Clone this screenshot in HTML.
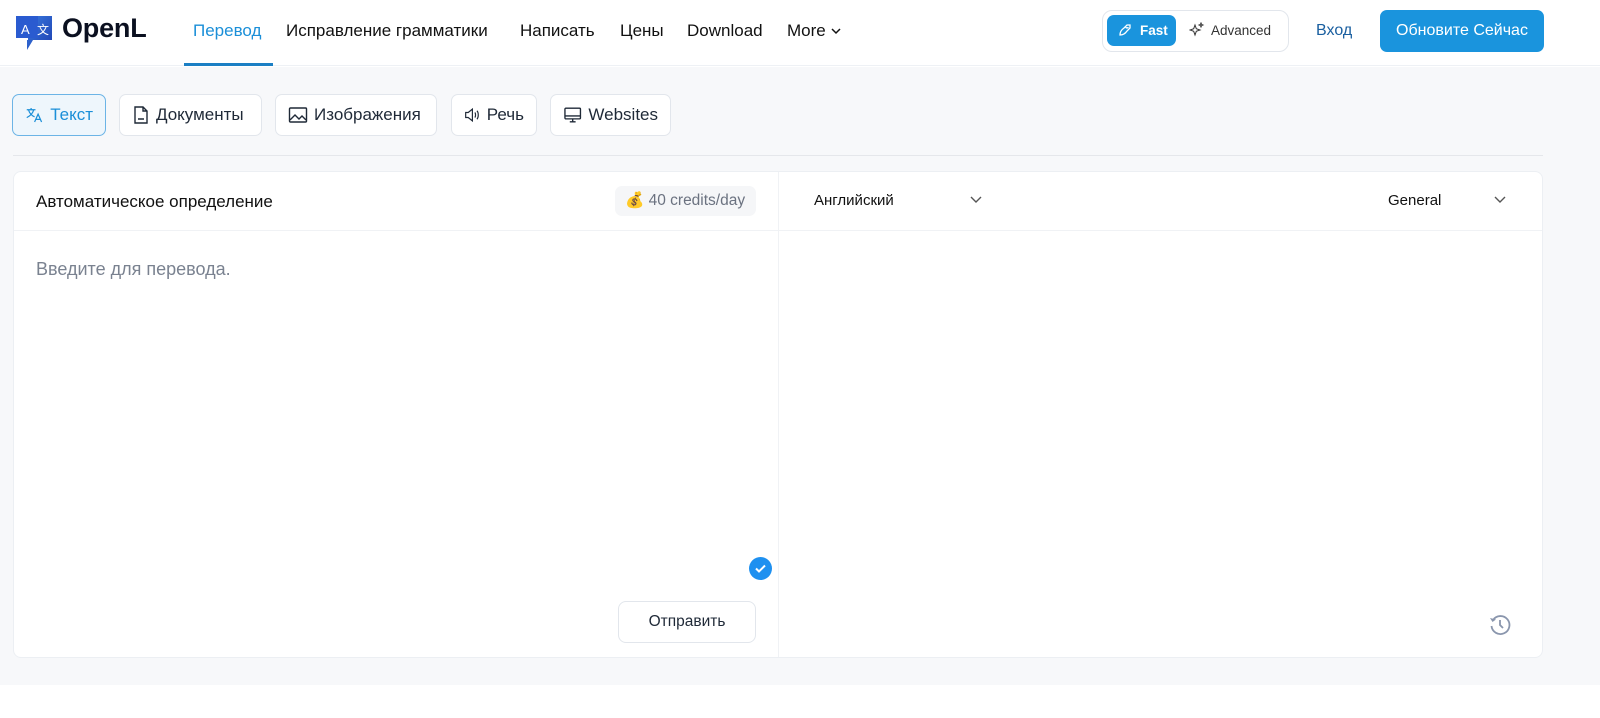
<!DOCTYPE html>
<html><head><meta charset="utf-8"><style>
*{box-sizing:border-box;margin:0;padding:0}
body{width:1600px;height:718px;background:#fff;font-family:"Liberation Sans",sans-serif;color:#111827;position:relative;overflow:hidden}
.hdr{position:absolute;left:0;top:0;width:1600px;height:66px;background:#fff;border-bottom:1px solid #eef1f5}
.main{position:absolute;left:0;top:67px;width:1600px;height:618px;background:#f7f8fa}
.nav{position:absolute;top:21px;font-size:17px;color:#111}
.logo{position:absolute;left:62px;top:13px;font-size:27px;font-weight:bold;color:#0b1020;letter-spacing:-0.2px}
.pill{position:absolute;top:94px;height:42px;border:1px solid #e2e6ec;border-radius:7px;background:#fff;font-size:17px;color:#1f2937;display:flex;align-items:center;padding:0 12px;gap:6px}
.card{position:absolute;left:13px;top:171px;width:1530px;height:487px;background:#fff;border:1px solid #eceff3;border-radius:8px}
</style></head><body>
<div class="hdr">
 <svg style="position:absolute;left:16px;top:15px" width="38" height="38" viewBox="0 0 38 38">
  <defs><linearGradient id="g" x1="0" y1="0" x2="1" y2="1"><stop offset="0" stop-color="#3a7be0"/><stop offset="1" stop-color="#1d3fb0"/></linearGradient></defs>
  <path d="M12 1h24v24H17l-6 10v-10H12z" fill="url(#g)"/>
  <path d="M0 1h22v22H0z" fill="#2a5bd0"/>
  <text x="5" y="19" fill="#fff" font-size="13" font-family="Liberation Sans">A</text>
  <text x="21" y="19" fill="#fff" font-size="12" font-family="Noto Sans CJK SC,sans-serif">文</text>
 </svg>
 <div class="logo">OpenL</div>
 <div class="nav" style="left:193px;color:#1b8fd8">Перевод</div>
 <div style="position:absolute;left:184px;top:63px;width:89px;height:3px;background:#1b7fc4"></div>
 <div class="nav" style="left:286px">Исправление грамматики</div>
 <div class="nav" style="left:520px">Написать</div>
 <div class="nav" style="left:620px">Цены</div>
 <div class="nav" style="left:687px">Download</div>
 <div class="nav" style="left:787px">More <svg width="12" height="10" viewBox="0 0 12 10"><path d="M2 3l4 4 4-4" stroke="#111" stroke-width="1.5" fill="none"/></svg></div>
 <div style="position:absolute;left:1102px;top:10px;width:187px;height:42px;border:1px solid #e2e6ec;border-radius:10px"></div>
 <div style="position:absolute;left:1107px;top:15px;width:69px;height:31px;background:#1a94dd;border-radius:7px;color:#fff;font-size:13.5px;font-weight:bold;line-height:31px;padding-left:33px">Fast</div>
 <svg style="position:absolute;left:1117px;top:22px" width="16" height="16" viewBox="0 0 16 16"><path d="M3 13c0-3 1-5 4-7l3-3h3v3l-3 3c-2 3-4 4-7 4z M9 5a1 1 0 1 0 2 0" stroke="#fff" stroke-width="1.3" fill="none"/></svg>
 <svg style="position:absolute;left:1189px;top:22px" width="16" height="16" viewBox="0 0 16 16"><path d="M6 3l1.3 3.7L11 8l-3.7 1.3L6 13l-1.3-3.7L1 8l3.7-1.3z M12 1l.6 1.4L14 3l-1.4.6L12 5l-.6-1.4L10 3l1.4-.6z" stroke="#333" stroke-width="1" fill="none"/></svg>
 <div style="position:absolute;left:1211px;top:23px;font-size:13.5px;color:#333">Advanced</div>
 <div style="position:absolute;left:1316px;top:22px;font-size:16px;color:#1a5fa0">Вход</div>
 <div style="position:absolute;left:1380px;top:10px;width:164px;height:42px;background:#1a94dd;border-radius:7px;color:#fff;font-size:16px;text-align:center;line-height:42px">Обновите Сейчас</div>
</div>
<div class="main">
 <div style="position:absolute;left:13px;top:88px;width:1530px;height:1px;background:#e5e7eb"></div>
</div>
<div class="pill" style="left:12px;width:94px;border-color:#6cb4e6;background:#eef6fc;color:#1b8fd8"><svg width="22" height="20" viewBox="0 0 22 20"><path d="M2 4h10M7 2v2M4 4c1 4 4 7 7 8M10 4c-1 4-4 7-8 9M11 18l4-9 4 9M12.5 15h5" stroke="#1b8fd8" stroke-width="1.4" fill="none"/></svg>Текст</div>
<div class="pill" style="left:119px;width:143px"><svg width="18" height="20" viewBox="0 0 18 20"><path d="M3 2h8l4 4v12H3z M11 2v4h4 M6 14h6" stroke="#1f2937" stroke-width="1.4" fill="none"/></svg>Документы</div>
<div class="pill" style="left:275px;width:162px"><svg width="20" height="18" viewBox="0 0 20 18"><rect x="1.5" y="2" width="17" height="14" rx="1" stroke="#1f2937" stroke-width="1.4" fill="none"/><path d="M2 14l5-5 4 4 3-3 4 4" stroke="#1f2937" stroke-width="1.4" fill="none"/></svg>Изображения</div>
<div class="pill" style="left:451px;width:86px"><svg width="20" height="18" viewBox="0 0 20 18"><path d="M2 6h3l5-4v14l-5-4H2z M13 6c1 1.5 1 4.5 0 6 M15.5 4c2 2.5 2 7.5 0 10" stroke="#1f2937" stroke-width="1.4" fill="none"/></svg>Речь</div>
<div class="pill" style="left:550px;width:121px"><svg width="20" height="18" viewBox="0 0 20 18"><rect x="2" y="2" width="16" height="11" rx="1" stroke="#1f2937" stroke-width="1.4" fill="none"/><path d="M2 10h16M7 16h6M10 13v3" stroke="#1f2937" stroke-width="1.4"/></svg>Websites</div>
<div class="card">
 <div style="position:absolute;left:0;top:58px;width:1528px;height:1px;background:#f0f2f5"></div>
 <div style="position:absolute;left:764px;top:0;width:1px;height:485px;background:#f0f2f5"></div>
 <div style="position:absolute;left:22px;top:20px;font-size:17px;color:#111">Автоматическое определение</div>
 <div style="position:absolute;left:601px;top:14px;width:141px;height:30px;background:#f5f6f8;border-radius:7px;font-size:15.5px;color:#6b7280;line-height:30px;padding-left:10px">💰 40 credits/day</div>
 <div style="position:absolute;left:800px;top:20px;font-size:15px;color:#111">Английский</div>
 <svg style="position:absolute;left:955px;top:23px" width="14" height="10" viewBox="0 0 14 10"><path d="M2 2l5 5 5-5" stroke="#555" stroke-width="1.4" fill="none"/></svg>
 <div style="position:absolute;left:1374px;top:20px;font-size:15px;color:#111">General</div>
 <svg style="position:absolute;left:1479px;top:23px" width="14" height="10" viewBox="0 0 14 10"><path d="M2 2l5 5 5-5" stroke="#555" stroke-width="1.4" fill="none"/></svg>
 <div style="position:absolute;left:22px;top:87px;font-size:18px;color:#7a8290">Введите для перевода.</div>
 <div style="position:absolute;left:735px;top:385px;width:23px;height:23px;border-radius:50%;background:#1e90f0"><svg width="23" height="23" viewBox="0 0 23 23"><path d="M7 11.5l3 3 6-6" stroke="#fff" stroke-width="2" fill="none"/></svg></div>
 <div style="position:absolute;left:604px;top:429px;width:138px;height:42px;border:1px solid #e2e6ec;border-radius:8px;font-size:15.5px;color:#1f2937;text-align:center;line-height:40px">Отправить</div>
 <svg style="position:absolute;left:1473px;top:440px" width="26" height="26" viewBox="0 0 26 26"><path d="M6 8a9 9 0 1 1-1.5 6" stroke="#8a96ad" stroke-width="1.8" fill="none"/><path d="M3 6l2.5 4 3.5-2.5z" fill="#8a96ad"/><path d="M13 8v5l3 3" stroke="#8a96ad" stroke-width="1.8" fill="none"/></svg>
</div>
</body></html>
